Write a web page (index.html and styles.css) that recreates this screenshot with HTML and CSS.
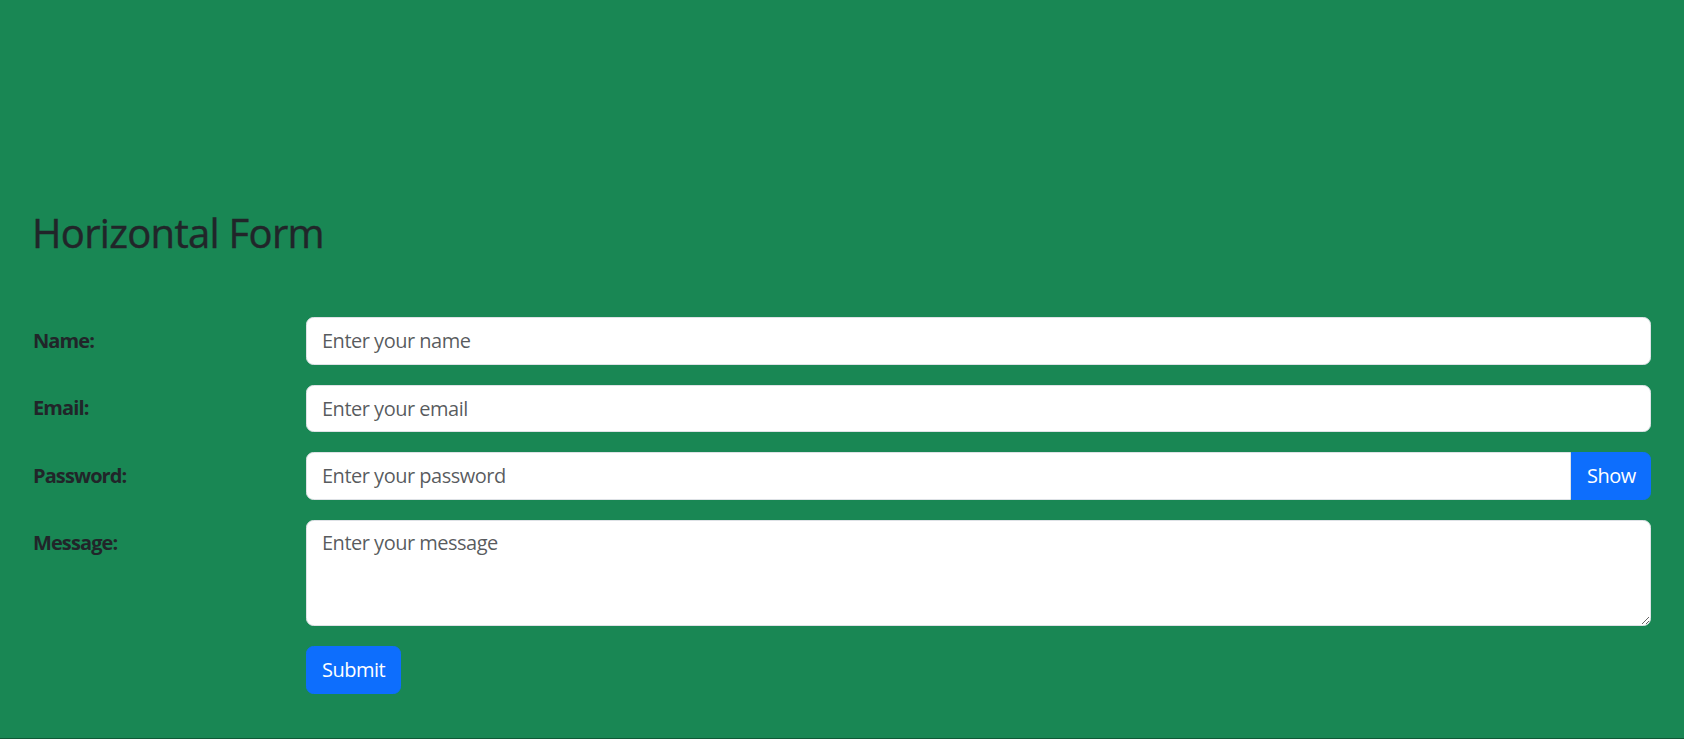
FILE: index.html
```html
<!DOCTYPE html>
<html lang="en">
<head>
<meta charset="utf-8">
<title>Horizontal Form</title>
<link rel="stylesheet" href="styles.css">
</head>
<body>
<main class="page">
  <h2 class="title">Horizontal Form</h2>
  <form class="form">
    <div class="row">
      <label class="label" for="name">Name:</label>
      <div class="field"><input class="control" id="name" type="text" placeholder="Enter your name"></div>
    </div>
    <div class="row">
      <label class="label" for="email">Email:</label>
      <div class="field"><input class="control" id="email" type="email" placeholder="Enter your email"></div>
    </div>
    <div class="row">
      <label class="label" for="pwd">Password:</label>
      <div class="field group">
        <input class="control control-left" id="pwd" type="password" placeholder="Enter your password">
        <button class="btn btn-show" type="button">Show</button>
      </div>
    </div>
    <div class="row">
      <label class="label" for="msg">Message:</label>
      <div class="field"><textarea class="control area" id="msg" placeholder="Enter your message"></textarea></div>
    </div>
    <div class="row">
      <div class="label"></div>
      <div class="field"><button class="btn btn-submit" type="submit">Submit</button></div>
    </div>
  </form>
</main>
</body>
</html>
```

FILE: styles.css
```css
html, body {
  margin: 0;
  height: 100%;
}
body {
  box-sizing: border-box;
  background: #198754;
  border-bottom: 1px solid #0f5a37;
  color: #212529;
  font-family: "Open Sans", "Noto Sans", sans-serif;
  font-size: 20px;
  line-height: 30px;
  letter-spacing: -0.5px;
}
.page {
  padding: 0 33px;
}
.title {
  margin: 209px 0 0 -1px;
  font-size: 40px;
  line-height: 48px;
  font-weight: 500;
  letter-spacing: -0.7px;
  -webkit-text-stroke: 0.4px #212529;
}
.form {
  margin-top: 60px;
}
.row {
  display: flex;
  margin-bottom: 20px;
}
.label {
  flex: none;
  width: 273px;
  padding-top: 8.75px;
  font-weight: 700;
  line-height: 30px;
  letter-spacing: -0.9px;
}
.field {
  flex: 1;
  min-width: 0;
}
.group {
  display: flex;
}
.control {
  display: block;
  box-sizing: border-box;
  width: 100%;
  height: 47.5px;
  margin: 0;
  padding: 7.5px 15px;
  border: 1.25px solid #dee2e6;
  border-radius: 7.5px;
  background: #fff;
  color: #212529;
  font-family: inherit;
  font-size: 20px;
  line-height: 30px;
  letter-spacing: -0.5px;
}
.control::placeholder {
  color: rgba(33, 37, 41, 0.75);
  opacity: 1;
}
.control-left {
  flex: 1;
  border-top-right-radius: 0;
  border-bottom-right-radius: 0;
}
.area {
  height: 106.5px;
  resize: vertical;
}
.btn {
  box-sizing: border-box;
  height: 47.5px;
  padding: 7.5px 15px;
  border: 1.25px solid #0d6efd;
  background: #0d6efd;
  color: #fff;
  font-family: inherit;
  font-size: 20px;
  line-height: 30px;
  letter-spacing: -0.5px;
  border-radius: 7.5px;
}
.btn-show {
  flex: none;
  width: 80px;
  border-top-left-radius: 0;
  border-bottom-left-radius: 0;
}
.btn-submit {
  width: 95px;
}
```
